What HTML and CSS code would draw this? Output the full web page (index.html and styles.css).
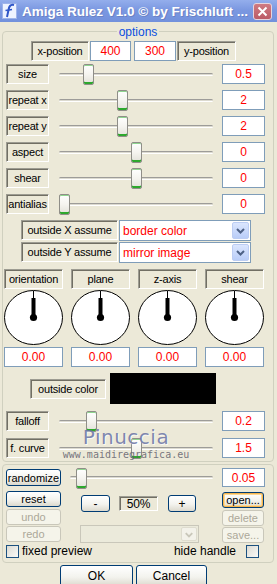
FILE: index.html
```html
<!DOCTYPE HTML>
<html>

<head>
    <meta charset="UTF-8">
    <title>Amiga Rulez V1.0</title>
    <link rel="stylesheet" href="styles.css">
</head>

<body>
    <div class="window">
        <div class="titlebar">
            <svg class="app-icon" width="15" height="16" viewBox="0 0 15 16">
                <rect x="0.5" y="0.5" width="14" height="15" fill="#eef3ff" stroke="#9fb4ea"/>
                <path d="M12 2 C8 1 7 4 6.5 7 L5 14" fill="none" stroke="#2f56c8" stroke-width="2"/>
                <path d="M3.5 7.5 L10 6.5" fill="none" stroke="#2f56c8" stroke-width="1.5"/>
            </svg>
            <span class="title">Amiga Rulez V1.0 © by Frischluft ...</span>
            <span class="close">
                <svg width="17" height="15" viewBox="0 0 17 15">
                    <path d="M4.5 3.5 L12.5 11.5 M12.5 3.5 L4.5 11.5" stroke="#fff" stroke-width="2"/>
                </svg>
            </span>
        </div>

        <div class="client">
            <div class="group options">
                <div class="legend">options</div>

                <div class="pos-row">
                    <span class="tag pos-tag">x-position</span>
                    <span class="field pos-x">400</span>
                    <span class="field pos-y">300</span>
                    <span class="tag pos-tag">y-position</span>
                </div>

                <div class="slider-row first">
                    <span class="tag side-tag">size</span>
                    <div class="slider"><div class="track"></div><div class="thumb" style="left: 30px"></div></div>
                    <span class="field value">0.5</span>
                </div>
                <div class="slider-row">
                    <span class="tag side-tag">repeat x</span>
                    <div class="slider"><div class="track"></div><div class="thumb" style="left: 64px"></div></div>
                    <span class="field value">2</span>
                </div>
                <div class="slider-row">
                    <span class="tag side-tag">repeat y</span>
                    <div class="slider"><div class="track"></div><div class="thumb" style="left: 64px"></div></div>
                    <span class="field value">2</span>
                </div>
                <div class="slider-row">
                    <span class="tag side-tag">aspect</span>
                    <div class="slider"><div class="track"></div><div class="thumb" style="left: 78px"></div></div>
                    <span class="field value">0</span>
                </div>
                <div class="slider-row">
                    <span class="tag side-tag">shear</span>
                    <div class="slider"><div class="track"></div><div class="thumb" style="left: 78px"></div></div>
                    <span class="field value">0</span>
                </div>
                <div class="slider-row">
                    <span class="tag side-tag">antialias</span>
                    <div class="slider"><div class="track"></div><div class="thumb" style="left: 6px"></div></div>
                    <span class="field value">0</span>
                </div>

                <div class="assume-row first">
                    <span class="tag assume-tag">outside X assume</span>
                    <div class="select">
                        <span class="select-text">border color</span>
                        <span class="drop">
                            <svg width="15" height="15" viewBox="0 0 15 15">
                                <path d="M4 6 L7.5 9.5 L11 6" fill="none" stroke="#4d6185" stroke-width="2"/>
                            </svg>
                        </span>
                    </div>
                </div>
                <div class="assume-row">
                    <span class="tag assume-tag">outside Y assume</span>
                    <div class="select">
                        <span class="select-text">mirror image</span>
                        <span class="drop">
                            <svg width="15" height="15" viewBox="0 0 15 15">
                                <path d="M4 6 L7.5 9.5 L11 6" fill="none" stroke="#4d6185" stroke-width="2"/>
                            </svg>
                        </span>
                    </div>
                </div>

                <div class="dials">
                    <div class="dial-col">
                        <span class="tag">orientation</span>
                        <svg class="dial" width="59" height="55" viewBox="0 0 59 55">
                            <ellipse cx="29.5" cy="27.5" rx="29" ry="27" fill="#fff" stroke="#000"/>
                            <line x1="29.5" y1="1" x2="29.5" y2="9" stroke="#000"/>
                            <line x1="29.5" y1="8" x2="29.5" y2="27" stroke="#000" stroke-width="4"/>
                            <circle cx="29.5" cy="27.5" r="3.6"/>
                        </svg>
                        <span class="field dial-value">0.00</span>
                    </div>
                    <div class="dial-col">
                        <span class="tag">plane</span>
                        <svg class="dial" width="59" height="55" viewBox="0 0 59 55">
                            <ellipse cx="29.5" cy="27.5" rx="29" ry="27" fill="#fff" stroke="#000"/>
                            <line x1="29.5" y1="1" x2="29.5" y2="9" stroke="#000"/>
                            <line x1="29.5" y1="8" x2="29.5" y2="27" stroke="#000" stroke-width="4"/>
                            <circle cx="29.5" cy="27.5" r="3.6"/>
                        </svg>
                        <span class="field dial-value">0.00</span>
                    </div>
                    <div class="dial-col">
                        <span class="tag">z-axis</span>
                        <svg class="dial" width="59" height="55" viewBox="0 0 59 55">
                            <ellipse cx="29.5" cy="27.5" rx="29" ry="27" fill="#fff" stroke="#000"/>
                            <line x1="29.5" y1="1" x2="29.5" y2="9" stroke="#000"/>
                            <line x1="29.5" y1="8" x2="29.5" y2="27" stroke="#000" stroke-width="4"/>
                            <circle cx="29.5" cy="27.5" r="3.6"/>
                        </svg>
                        <span class="field dial-value">0.00</span>
                    </div>
                    <div class="dial-col">
                        <span class="tag">shear</span>
                        <svg class="dial" width="59" height="55" viewBox="0 0 59 55">
                            <ellipse cx="29.5" cy="27.5" rx="29" ry="27" fill="#fff" stroke="#000"/>
                            <line x1="29.5" y1="1" x2="29.5" y2="9" stroke="#000"/>
                            <line x1="29.5" y1="8" x2="29.5" y2="27" stroke="#000" stroke-width="4"/>
                            <circle cx="29.5" cy="27.5" r="3.6"/>
                        </svg>
                        <span class="field dial-value">0.00</span>
                    </div>
                </div>

                <div class="color-row">
                    <span class="tag color-tag">outside color</span>
                    <span class="swatch"></span>
                </div>

                <div class="slider-row low">
                    <span class="tag side-tag">falloff</span>
                    <div class="slider"><div class="track"></div><div class="thumb" style="left: 33px"></div></div>
                    <span class="field value">0.2</span>
                </div>
                <div class="slider-row low">
                    <span class="tag side-tag">f. curve</span>
                    <div class="slider"><div class="track"></div><div class="thumb" style="left: 78px"></div></div>
                    <span class="field value">1.5</span>
                </div>
            </div>

            <div class="group tools">
                <div class="random-row">
                    <span class="btn random">randomize</span>
                    <div class="slider wide"><div class="track"></div><div class="thumb" style="left: 12px"></div></div>
                    <span class="field value">0.05</span>
                </div>

                <div class="tool-grid">
                    <div class="col col-left">
                        <span class="btn reset">reset</span>
                        <span class="btn disabled undo">undo</span>
                        <span class="btn disabled redo">redo</span>
                    </div>
                    <div class="col col-mid">
                        <div class="zoom-row">
                            <span class="btn zoom-btn minus">-</span>
                            <span class="tag zoom-level">50%</span>
                            <span class="btn zoom-btn plus">+</span>
                        </div>
                        <div class="combo">
                            <span class="combo-drop">
                                <svg width="15" height="13" viewBox="0 0 15 13">
                                    <path d="M4 5 L7.5 8.5 L11 5" fill="none" stroke="#c9c7ba" stroke-width="2"/>
                                </svg>
                            </span>
                        </div>
                    </div>
                    <div class="col col-right">
                        <span class="btn focus open">open...</span>
                        <span class="btn disabled delete">delete</span>
                        <span class="btn disabled save">save...</span>
                    </div>
                </div>

                <div class="check-row">
                    <span class="check"></span>
                    <span class="check-label">fixed preview</span>
                    <span class="check-label hide-label">hide handle</span>
                    <span class="check hide-check"></span>
                </div>
            </div>

            <div class="ok-row">
                <span class="btn big ok">OK</span>
                <span class="btn big cancel">Cancel</span>
            </div>
        </div>

        <div class="watermark">
            <div class="wm-name">Pinuccia</div>
            <div class="wm-site">www.maidiregrafica.eu</div>
        </div>
    </div>
</body>

</html>
```

FILE: styles.css
```css
body {
    margin: 0;
    font-family: "Liberation Sans", Arial, sans-serif;
    font-size: 11px;
    background: #ece9d8;
}

.window {
    position: relative;
    width: 277px;
    height: 584px;
    overflow: hidden;
    background: #ece9d8;
}

.titlebar {
    height: 22px;
    display: flex;
    align-items: center;
    background: linear-gradient(#94aeec, #7b98e1 45%, #7291dc);
    color: #fff;
}

.app-icon {
    margin-left: 2px;
}

.title {
    flex: 1;
    margin-left: 5px;
    font-size: 13.5px;
    font-weight: bold;
    white-space: nowrap;
    text-shadow: 1px 1px #6b82c4;
}

.close {
    box-sizing: border-box;
    width: 19px;
    height: 17px;
    margin-right: 5px;
    display: flex;
    align-items: center;
    justify-content: center;
    border: 1px solid #e6d4dc;
    border-radius: 3px;
    background: linear-gradient(#cf7a82, #bb5b66);
}

.client {
    padding: 0 3px 0 2px;
}

.group {
    border: 1px solid #d0d0bf;
    border-radius: 4px;
}

.options {
    margin-top: 9px;
    padding-bottom: 3px;
}

.legend {
    width: max-content;
    height: 12px;
    margin: -6px auto 0;
    padding: 0 2px;
    line-height: 12px;
    font-size: 12px;
    color: #0a4fe0;
    background: #ece9d8;
}

/* sunken caption boxes */
.tag {
    box-sizing: border-box;
    height: 20px;
    display: flex;
    align-items: center;
    justify-content: center;
    border: 1px solid;
    border-color: #9d9c92 #fff #fff #9d9c92;
    box-shadow: inset 1px 1px #716f64;
    white-space: nowrap;
    letter-spacing: -0.2px;
}

.field {
    box-sizing: border-box;
    height: 20px;
    display: flex;
    align-items: center;
    justify-content: center;
    background: #fff;
    border: 1px solid #7f9db9;
    color: #f00;
    font-size: 12px;
}

.pos-row {
    margin: 3px 0 0 28px;
    display: flex;
}

.pos-tag {
    width: 58px;
}

.pos-x {
    width: 41px;
    margin-left: 1px;
}

.pos-y {
    width: 42px;
    margin-left: 3px;
}

.pos-row .pos-tag:last-child {
    width: 59px;
    margin-left: 1px;
}

.slider-row {
    margin: 6px 0 0 3px;
    height: 20px;
    display: flex;
}

.slider-row.first {
    margin-top: 3px;
}

.slider-row.low {
    margin-top: 7px;
}

.side-tag {
    width: 43px;
}

.slider {
    position: relative;
    width: 166px;
    height: 20px;
    margin-left: 4px;
    display: flex;
    align-items: center;
}

.track {
    flex: 1;
    height: 1px;
    margin: 0 6px;
    border-top: 1px solid #9d9c99;
    border-bottom: 1px solid #fff;
    border-radius: 2px;
    background: #dcdad0;
}

.thumb {
    position: absolute;
    top: 0;
    box-sizing: border-box;
    width: 11px;
    height: 21px;
    border: 1px solid #8f8e88;
    border-radius: 2px;
    background: linear-gradient(#fff, #f5f4ef 50%, #e2e1d9);
    box-shadow: inset 0 1px #8fd68f, inset 0 -2px #2da82d;
}

.value {
    width: 43px;
    margin-left: 3px;
}

.assume-row {
    margin-left: 18px;
    display: flex;
}

.assume-row.first {
    margin-top: 6px;
    margin-bottom: 1px;
}

.assume-tag {
    width: 97px;
}

.select {
    box-sizing: border-box;
    width: 132px;
    height: 21px;
    margin-left: 1px;
    display: flex;
    align-items: center;
    background: #fff;
    border: 1px solid #7f9db9;
    color: #f00;
    font-size: 12px;
}

.select-text {
    flex: 1;
    padding-left: 3px;
}

.drop {
    box-sizing: border-box;
    width: 17px;
    height: 17px;
    margin-right: 1px;
    display: flex;
    align-items: center;
    justify-content: center;
    border: 1px solid #bccdf3;
    border-radius: 2px;
    background: linear-gradient(#dbe6fe, #b9cdf8);
}

.dials {
    margin: 6px 0 0 1px;
    display: flex;
    gap: 8px;
}

.dial-col {
    width: 59px;
    display: flex;
    flex-direction: column;
}

.dial {
    display: block;
    margin-top: 1px;
}

.dial-value {
    margin-top: 2px;
}

.color-row {
    margin: 6px 0 0 27px;
    height: 31px;
    display: flex;
    align-items: center;
}

.color-tag {
    width: 76px;
}

.swatch {
    width: 106px;
    height: 31px;
    margin-left: 4px;
    background: #000;
}

.tools {
    margin-top: 2px;
    padding-bottom: 4px;
}

.random-row {
    margin: 3px 0 0 3px;
    height: 19px;
    display: flex;
    align-items: center;
}

.random-row .value {
    height: 19px;
}

.btn {
    box-sizing: border-box;
    height: 16px;
    display: flex;
    align-items: center;
    justify-content: center;
    border: 1px solid #003c74;
    border-radius: 3px;
    background: linear-gradient(#fff, #f3f3ee 55%, #dcd9cd);
    color: #000;
    white-space: nowrap;
}

.btn.disabled {
    border-color: #c9c7ba;
    background: #f5f4ea;
    color: #aca899;
}

.btn.focus {
    box-shadow: inset 0 0 0 1px #f5b54e, inset 0 0 0 2px #fcd895;
}

.random {
    width: 55px;
    height: 17px;
}

.slider.wide {
    width: 155px;
    margin-left: 3px;
}

.tool-grid {
    display: flex;
}

.col {
    display: flex;
    flex-direction: column;
}

.col-left {
    width: 55px;
    margin-left: 3px;
}

.reset {
    margin-top: 4px;
}

.undo {
    margin-top: 2px;
}

.redo {
    margin-top: 1px;
}

.col-mid {
    width: 119px;
    margin-left: 19px;
}

.zoom-row {
    margin-top: 8px;
    display: flex;
    align-items: center;
}

.zoom-btn {
    height: 17px;
    font-size: 12px;
}

.minus {
    width: 29px;
    margin-left: 1px;
}

.zoom-level {
    width: 39px;
    height: 15px;
    margin-left: 9px;
    font-size: 12px;
}

.plus {
    width: 28px;
    margin-left: 10px;
}

.combo {
    box-sizing: border-box;
    height: 18px;
    margin-top: 13px;
    display: flex;
    justify-content: flex-end;
    align-items: center;
    border: 1px solid #c9c7ba;
    background: #ebeadb;
}

.combo-drop {
    box-sizing: border-box;
    width: 16px;
    height: 14px;
    margin-right: 1px;
    display: flex;
    align-items: center;
    justify-content: center;
    border: 1px solid #dedccf;
    border-radius: 2px;
    background: #f3f2ea;
}

.col-right {
    width: 42px;
    margin-left: 23px;
}

.open {
    margin-top: 5px;
}

.delete {
    margin-top: 2px;
}

.save {
    margin-top: 1px;
}

.check-row {
    margin: 1px 0 0 3px;
    height: 14px;
    display: flex;
    align-items: center;
}

.check {
    box-sizing: border-box;
    width: 13px;
    height: 13px;
    border: 1px solid #1c5180;
    background: linear-gradient(135deg, #dcdbd4, #fafaf7);
}

.check-label {
    margin-left: 3px;
    font-size: 12px;
}

.hide-label {
    margin-left: auto;
}

.hide-check {
    margin: 0 14px 0 10px;
}

.ok-row {
    margin: 2px 0 0 58px;
    display: flex;
}

.btn.big {
    height: 22px;
    font-size: 12px;
}

.ok {
    width: 73px;
}

.cancel {
    width: 71px;
    margin-left: 3px;
}

/* watermark stamped over the screenshot */
.watermark {
    position: absolute;
    left: 62px;
    top: 426px;
    width: 128px;
    text-align: center;
    pointer-events: none;
}

.wm-name {
    font-family: "DejaVu Sans", sans-serif;
    font-size: 20px;
    line-height: 23px;
    letter-spacing: 0.5px;
    color: rgba(105, 115, 165, 0.85);
    text-shadow: 1px 1px rgba(255, 255, 255, 0.7);
}

.wm-site {
    font-family: "DejaVu Sans Mono", monospace;
    font-size: 10px;
    line-height: 11px;
    color: rgba(95, 95, 108, 0.85);
}
```
